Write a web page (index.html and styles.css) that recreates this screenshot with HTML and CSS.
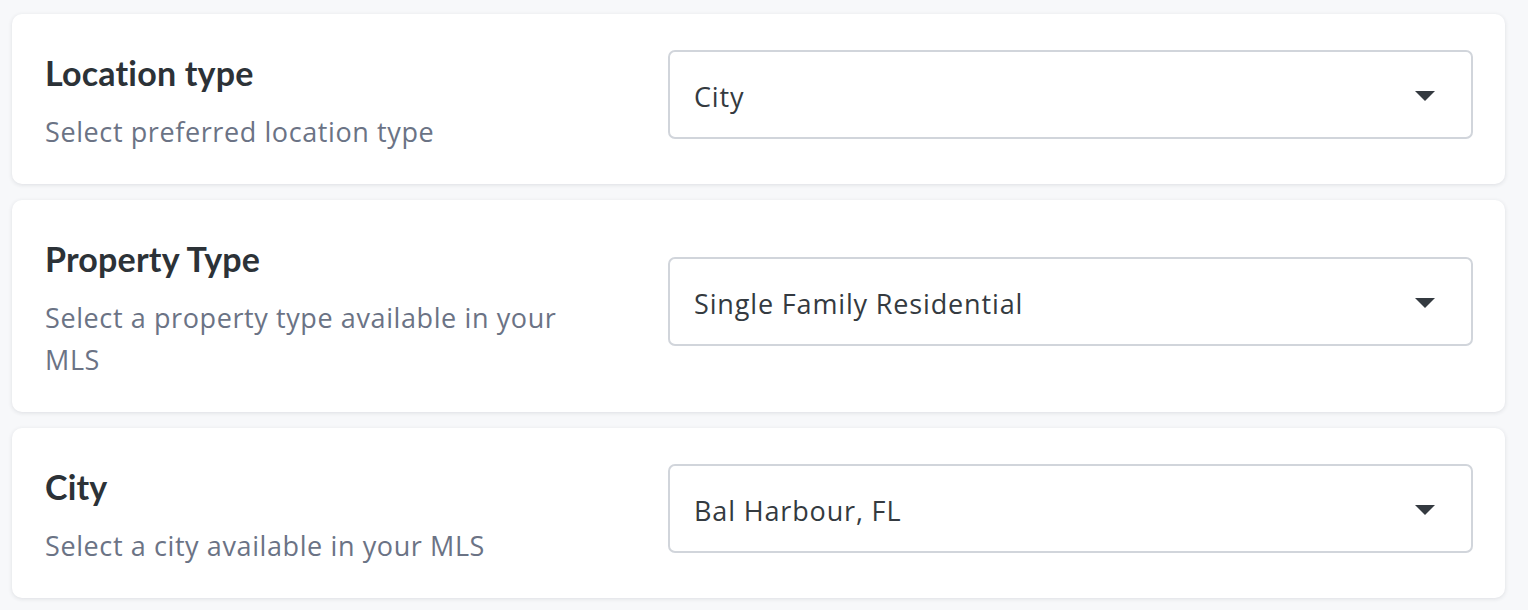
FILE: index.html
```html
<!DOCTYPE html>
<html lang="en">
<head>
    <meta charset="UTF-8">
    <meta name="viewport" content="width=device-width, initial-scale=1.0">
    <title>Search Preferences</title>
    <link rel="stylesheet" href="styles.css">
</head>
<body>

    <div class="settings">
        <div class="setting-card">
            <div class="setting-info">
                <h2>Location type</h2>
                <p>Select preferred location type</p>
            </div>
            <div class="select-box">
                <span>City</span>
                <span class="caret"></span>
            </div>
        </div>

        <div class="setting-card">
            <div class="setting-info">
                <h2>Property Type</h2>
                <p>Select a property type available in your MLS</p>
            </div>
            <div class="select-box">
                <span>Single Family Residential</span>
                <span class="caret"></span>
            </div>
        </div>

        <div class="setting-card">
            <div class="setting-info">
                <h2>City</h2>
                <p>Select a city available in your MLS</p>
            </div>
            <div class="select-box">
                <span>Bal Harbour, FL</span>
                <span class="caret"></span>
            </div>
        </div>
    </div>

</body>
</html>
```

FILE: styles.css
```css
/* Page */
body {
    font-family: "Open Sans", Lato, sans-serif;
    background-color: #f7f8fa;
    margin: 0;
    padding: 0;
}

.settings {
    display: flex;
    flex-direction: column;
    gap: 16px;
    padding: 14px 23px 12px 12px;
}

/* Cards */
.setting-card {
    display: flex;
    align-items: center;
    justify-content: space-between;
    gap: 40px;
    padding: 38px 32px 31px 33px;
    background-color: #fff;
    border-radius: 10px;
    box-shadow: 0 1px 4px rgba(30, 40, 60, 0.12);
}

.setting-info {
    width: 550px;
}

.setting-info h2 {
    margin: 0 0 17px;
    font-family: Lato, sans-serif;
    font-size: 34px;
    line-height: 42px;
    letter-spacing: 0.2px;
    font-weight: 700;
    color: #2c3237;
}

.setting-info p {
    margin: 0;
    font-size: 27px;
    line-height: 42px;
    letter-spacing: 0.6px;
    color: #6b7385;
}

/* Select */
.select-box {
    display: flex;
    align-items: center;
    justify-content: space-between;
    width: 805px;
    height: 89px;
    box-sizing: border-box;
    margin-top: -16px; /* sits a little above center */
    padding: 3px 36px 0 24px;
    border: 2px solid #d1d5db;
    border-radius: 7px;
    font-size: 27px;
    letter-spacing: 0.85px;
    color: #343a40;
}

.caret {
    width: 0;
    height: 0;
    border-left: 10px solid transparent;
    border-right: 10px solid transparent;
    border-top: 10px solid #343a40;
}
```
